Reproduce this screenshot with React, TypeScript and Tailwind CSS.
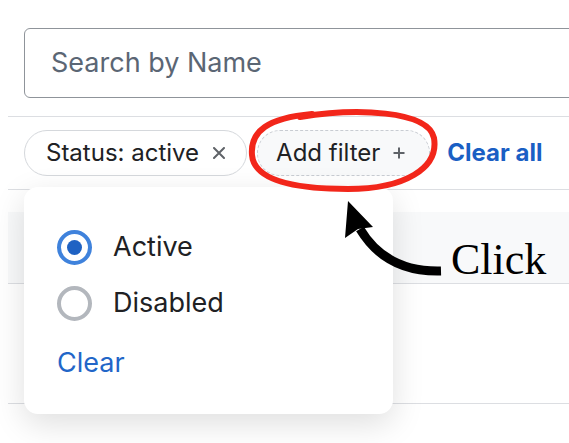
function Radio({ checked }: { checked: boolean }) {
    return checked ? (
        <span className="w-[35px] h-[35px] rounded-full border-[4px] border-[#3f82dc] flex items-center justify-center">
            <span className="w-[15px] h-[15px] rounded-full bg-[#1f62c3]" />
        </span>
    ) : (
        <span className="w-[35px] h-[35px] rounded-full border-[4px] border-[#b3b7bd]" />
    );
}

export default function App() {
    return (
        <div className="relative w-[569px] h-[443px] overflow-hidden bg-white font-['Inter',sans-serif] text-[#202124]">
            <div className="w-[720px] pl-[8px]">
                <div className="pt-[28px] pb-[18px] pl-[16px]">
                    <div className="h-[70px] rounded-[6px] border border-[#8f949a] flex items-center pl-[26px] text-[27px] text-[#5b6674]">
                        Search by Name
                    </div>
                </div>

                <div className="border-t border-[#dcdee2] py-[13px] pl-[16px] flex items-center">
                    <div className="h-[46px] rounded-full border border-[#d5d8dc] flex items-center pl-[21px] pr-[21px] gap-[14px] text-[24px]">
                        Status: active
                        <svg width="12" height="12" viewBox="0 0 12 12" className="text-[#5f6368]">
                            <path d="M1 1 L11 11 M11 1 L1 11" stroke="currentColor" strokeWidth="2" strokeLinecap="round" />
                        </svg>
                    </div>
                    <div className="ml-[10px] h-[46px] rounded-full border border-dashed border-[#c8ccd2] bg-[#f8f9fa] flex items-center pl-[18px] pr-[24px] gap-[13px] text-[24px]">
                        Add filter
                        <svg width="12" height="12" viewBox="0 0 12 12" className="text-[#5f6368]">
                            <path d="M6 0.5 V11.5 M0.5 6 H11.5" stroke="currentColor" strokeWidth="2" />
                        </svg>
                    </div>
                    <button className="ml-[17px] text-[24px] font-bold text-[#1a5fc4]">Clear all</button>
                </div>

                <div className="border-t border-[#dcdee2] pt-[22px]">
                    <div className="h-[72px] bg-[#f8f9fa] border-b border-[#dcdee2]" />
                    <div className="h-[120px] border-b border-[#dcdee2]" />
                </div>
            </div>

            {/* filter popover */}
            <div className="absolute left-[24px] top-[187px] w-[369px] h-[227px] rounded-[14px] bg-white shadow-[0_10px_32px_rgba(0,0,0,0.13)] pl-[33px] pt-[43px] flex flex-col">
                <label className="flex items-center gap-[21px] text-[27px] h-[35px]">
                    <Radio checked />
                    Active
                </label>
                <label className="mt-[21px] flex items-center gap-[21px] text-[27px] h-[35px]">
                    <Radio checked={false} />
                    Disabled
                </label>
                <button className="mt-[22px] self-start text-[27px] text-[#2266c8]">Clear</button>
            </div>

            {/* annotation */}
            <svg className="absolute inset-0 pointer-events-none" width="569" height="443" viewBox="0 0 569 443">
                <path
                    d="M300 117 C 355 108, 428 110, 434 138 C 439 168, 405 189, 348 189 C 292 189, 254 180, 252 155 C 250 131, 268 118, 312 114"
                    fill="none"
                    stroke="#f2261a"
                    strokeWidth="6"
                    strokeLinecap="round"
                />
                <path d="M441 271 C 405 272, 378 259, 360 229" fill="none" stroke="#000" strokeWidth="9" />
                <polygon points="348,201 373,227 358,229 345,238" fill="#000" />
            </svg>
            <div className="absolute left-[451px] top-[238px] font-['Liberation_Serif',serif] text-[44px] leading-none text-black">
                Click
            </div>
        </div>
    );
}
